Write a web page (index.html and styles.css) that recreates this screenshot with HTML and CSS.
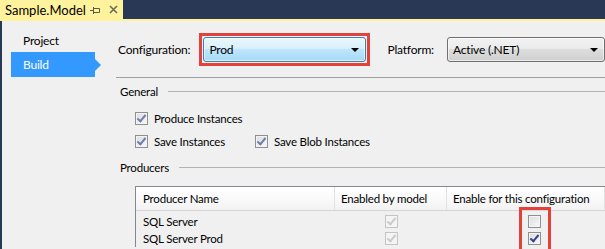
FILE: index.html
```html
<!DOCTYPE html>
<html lang="en">
<head>
    <meta charset="UTF-8">
    <title>Sample.Model - Build</title>
    <link rel="stylesheet" href="styles.css">
</head>
<body>

    <!-- Document tab -->
    <div class="titlebar">
        <div class="doc-tab">
            <span class="doc-title">Sample.Model</span>
            <svg class="pin" width="10" height="8" viewBox="0 0 10 8">
                <path d="M0 4.5H3.5M3.5 1V8M4 2.5H9.5V6.5H4" fill="none" stroke="#5b5b45" stroke-width="1"/>
            </svg>
            <svg class="close" width="9" height="9" viewBox="0 0 9 9">
                <path d="M1 1L8 8M8 1L1 8" stroke="#6b6b55" stroke-width="1.6"/>
            </svg>
        </div>
    </div>
    <div class="tab-strip"></div>

    <div class="designer">
        <!-- Left navigation -->
        <nav class="side-nav">
            <a href="#" class="nav-item">Project</a>
            <a href="#" class="nav-item active">Build</a>
        </nav>

        <!-- Build page -->
        <div class="page">
            <div class="config-bar">
                <span class="config-label">Configuration:</span>
                <div class="highlight">
                    <div class="combo combo-hot">
                        <span>Prod</span>
                        <span class="combo-arrow"></span>
                    </div>
                </div>
                <span class="platform-label">Platform:</span>
                <div class="combo combo-platform">
                    <span>Active (.NET)</span>
                    <span class="combo-arrow"></span>
                </div>
            </div>

            <!-- General -->
            <div class="group-title"><span>General</span></div>
            <div class="check-list">
                <div class="check-row">
                    <label class="check-item"><span class="checkbox checked"></span>Produce Instances</label>
                </div>
                <div class="check-row">
                    <label class="check-item first-col"><span class="checkbox checked"></span>Save Instances</label>
                    <label class="check-item"><span class="checkbox checked"></span>Save Blob Instances</label>
                </div>
            </div>

            <!-- Producers -->
            <div class="group-title producers-title"><span>Producers</span></div>
            <div class="producer-table">
                <div class="table-head">
                    <div class="cell col-name">Producer Name</div>
                    <div class="cell col-model">Enabled by model</div>
                    <div class="cell col-config">Enable for this configuration</div>
                </div>
                <div class="table-body">
                    <div class="table-row">
                        <div class="cell col-name">SQL Server</div>
                        <div class="cell col-model center"><span class="checkbox checked disabled"></span></div>
                        <div class="cell col-config"><span class="checkbox"></span></div>
                    </div>
                    <div class="table-row">
                        <div class="cell col-name">SQL Server Prod</div>
                        <div class="cell col-model center"><span class="checkbox checked disabled"></span></div>
                        <div class="cell col-config"><span class="checkbox checked strong"></span></div>
                    </div>
                </div>
                <!-- annotation box around the configuration checkboxes -->
                <div class="marker"></div>
            </div>
        </div>
    </div>

</body>
</html>
```

FILE: styles.css
```css
/* General Styles */
body {
    font-family: 'Lato', 'Noto Sans', sans-serif;
    font-size: 11.5px;
    letter-spacing: -0.2px;
    color: #000;
    margin: 0;
    padding: 0;
    width: 605px;
    height: 249px;
    overflow: hidden;
    background-color: #f0f0f0;
}

/* Title bar with document tab */
.titlebar {
    height: 19px;
    background-color: #293955;
    display: flex;
}

.doc-tab {
    width: 118px;
    padding-left: 5px;
    background-color: #fff29d;
    display: flex;
    align-items: center;
    font-size: 13px;
    letter-spacing: 0;
}

.pin {
    margin-left: auto;
}

.close {
    margin-left: 9px;
    margin-right: 5px;
}

.tab-strip {
    height: 2px;
    background-color: #fff29d;
}

/* Designer area */
.designer {
    display: flex;
    height: 228px;
    overflow: hidden;
    border-left: 2px solid #293955;
}

.side-nav {
    width: 114px;
    padding-top: 7px;
    display: flex;
    flex-direction: column;
    font-size: 12px;
}

.nav-item {
    position: relative;
    margin-left: 9px;
    width: 72px;
    height: 24px;
    padding-left: 12px;
    display: flex;
    align-items: center;
    color: #000;
    text-decoration: none;
}

.nav-item.active {
    height: 25px;
    background-color: #3399ff;
    color: #fff;
}

/* little arrow on the selected item */
.nav-item.active::after {
    content: '';
    position: absolute;
    right: -6px;
    top: 7px;
    border-left: 6px solid #3399ff;
    border-top: 6px solid transparent;
    border-bottom: 6px solid transparent;
}

.page {
    flex: 1;
    min-width: 0;
}

/* Configuration / Platform bar */
.config-bar {
    display: flex;
    align-items: center;
    height: 55px;
    padding-top: 1px;
    border-bottom: 1px solid #a0a0a0;
    font-size: 12px;
}

.config-label {
    width: 82px;
    padding-left: 2px;
}

.platform-label {
    width: 60px;
    margin-left: 17px;
}

.highlight {
    border: 3px solid #e5413b;
    padding: 1px;
}

.combo {
    height: 23px;
    border: 1px solid #707070;
    border-radius: 3px;
    padding: 0 6px 0 5px;
    display: flex;
    align-items: center;
    justify-content: space-between;
    background: linear-gradient(#f2f2f2, #ebebeb 45%, #dddddd 50%, #cfcfcf);
    box-shadow: inset 0 0 0 1px rgba(255, 255, 255, 0.6);
}

.combo-hot {
    width: 150px;
    border-color: #3c7fb1;
    background: linear-gradient(#eaf6fd, #d9f0fc 45%, #bee6fd 50%, #a7d9f5);
}

.combo-platform {
    width: 146px;
}

.combo-arrow {
    width: 0;
    height: 0;
    border-left: 4px solid transparent;
    border-right: 4px solid transparent;
    border-top: 4px solid #000;
    margin-top: 1px;
}

/* Group titles with rule */
.group-title {
    display: flex;
    align-items: center;
    height: 16px;
    margin-top: 5px;
    padding-left: 4px;
}

.group-title::after {
    content: '';
    flex: 1;
    height: 1px;
    margin-left: 10px;
    background-color: #b4b4b4;
}

.producers-title {
    margin-top: 6px;
}

/* Checkbox rows */
.check-list {
    padding-top: 8px;
    padding-left: 19px;
}

.check-row {
    display: flex;
    height: 23px;
    align-items: center;
}

.check-item {
    display: flex;
    align-items: center;
    gap: 6px;
}

.first-col {
    width: 120px;
}

.checkbox {
    position: relative;
    display: inline-block;
    width: 11px;
    height: 11px;
    border: 1px solid #8e8f8f;
    background: linear-gradient(135deg, #dcdcdc, #f8f8f8);
    box-shadow: inset 0 0 0 1px #f4f4f4;
}

.checkbox.checked::after {
    content: '';
    position: absolute;
    left: 3px;
    top: 0;
    width: 3px;
    height: 7px;
    border-right: 2px solid #6d7fae;
    border-bottom: 2px solid #6d7fae;
    transform: rotate(40deg);
}

.checkbox.strong::after {
    border-color: #2e4490;
}

.checkbox.disabled {
    border-color: #c4c4c4;
    background: #f4f4f4;
    box-shadow: none;
}

.checkbox.disabled::after {
    border-color: #cbcbcb;
}

/* Producers table */
.producer-table {
    position: relative;
    margin-top: 11px;
    margin-left: 19px;
    border-top: 1px solid #828790;
    border-left: 1px solid #828790;
}

.table-head {
    display: flex;
    height: 23px;
    background: linear-gradient(#ffffff, #fafafa 50%, #f2f2f2);
    border-bottom: 1px solid #d5d5d5;
}

.table-head .cell {
    border-right: 1px solid #e2e2e2;
}

.table-body {
    padding-top: 2px;
}

.table-row {
    display: flex;
    height: 17px;
}

.cell {
    display: flex;
    align-items: center;
    padding-left: 7px;
    box-sizing: border-box;
    white-space: nowrap;
}

.col-name {
    width: 199px;
}

.col-model {
    width: 112px;
    padding-left: 6px;
}

.col-model.center {
    justify-content: center;
    padding-left: 0;
}

.col-config {
    flex: 1;
    padding-left: 81px;
}

.table-head .col-config {
    padding-left: 6px;
}

/* red annotation around the configuration checkboxes */
.marker {
    position: absolute;
    left: 383px;
    top: 20px;
    width: 26px;
    height: 40px;
    border: 3px solid #e5413b;
    border-bottom: none;
}
```
